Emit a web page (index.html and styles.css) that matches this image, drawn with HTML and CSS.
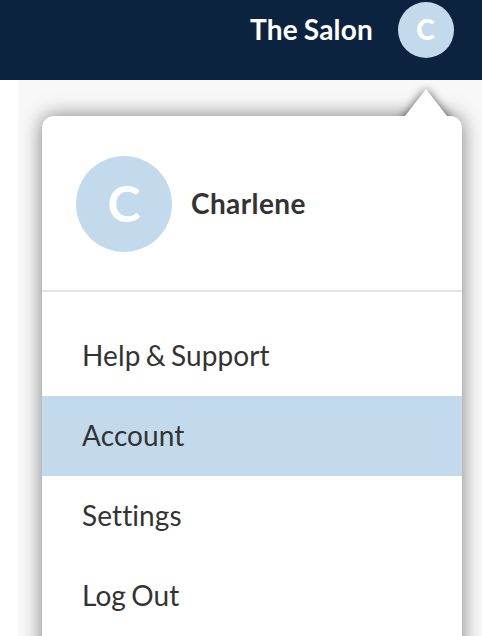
FILE: index.html
```html
<!DOCTYPE html>
<html lang="en">

<head>
    <meta charset="UTF-8">
    <meta name="viewport" content="width=device-width, initial-scale=1.0">
    <title>The Salon</title>
    <link rel="stylesheet" href="styles.css">
</head>

<body>
    <header class="topbar">
        <span class="salon-name">The Salon</span>
        <div class="avatar">C</div>
    </header>
    <main class="page">
        <div class="dropdown">
            <svg class="arrow" width="80" height="34" viewBox="0 0 80 34">
                <path d="M12 43 L40 7 L68 43 Z" fill="#fff" />
            </svg>
            <div class="profile">
                <div class="avatar avatar-large">C</div>
                <span class="profile-name">Charlene</span>
            </div>
            <nav class="menu">
                <a class="menu-item">Help &amp; Support</a>
                <a class="menu-item active">Account</a>
                <a class="menu-item">Settings</a>
                <a class="menu-item">Log Out</a>
            </nav>
        </div>
    </main>
</body>

</html>
```
FILE: styles.css
```css
html,
body {
    margin: 0;
    height: 100%;
    font-family: Lato, sans-serif;
    font-variant-ligatures: none;
    color: #333;
    background-color: #fff;
    overflow: hidden;
}

body {
    display: flex;
    flex-direction: column;
}

.topbar {
    box-sizing: border-box;
    height: 80px;
    flex: none;
    display: flex;
    align-items: center;
    justify-content: flex-end;
    gap: 25px;
    padding: 0 28px 20px 0;
    background-color: #0c233f;
}

.salon-name {
    padding-bottom: 2px;
    color: #fff;
    font-size: 28px;
    font-weight: 700;
    letter-spacing: 0.2px;
    word-spacing: -1.2px;
}

.avatar {
    box-sizing: border-box;
    width: 56px;
    height: 56px;
    flex: none;
    display: flex;
    align-items: center;
    justify-content: center;
    padding: 0 1px 2px 0;
    border-radius: 50%;
    background-color: #c3daec;
    color: #fff;
    font-size: 28px;
    font-weight: 900;
}

.page {
    flex: 1;
    min-height: 0;
    display: flex;
    margin-left: 18px;
    padding: 36px 20px 0 24px;
    background-color: #f8f8f8;
    overflow: hidden;
}

.dropdown {
    position: relative;
    flex: 1;
    margin-bottom: -20px;
    border-radius: 12px 12px 0 0;
    background-color: #fff;
    box-shadow: 0 0 20px rgba(0, 0, 0, 0.5);
}

/* pointer towards the avatar */
.arrow {
    position: absolute;
    top: -34px;
    right: -4px;
    overflow: hidden;
}

.arrow path {
    filter: drop-shadow(0 0 5px rgba(0, 0, 0, 0.6));
}

.profile {
    box-sizing: border-box;
    height: 176px;
    display: flex;
    align-items: center;
    gap: 19px;
    padding: 2px 0 0 34px;
    border-bottom: 2px solid #e3e3e3;
}

.avatar-large {
    width: 96px;
    height: 96px;
    padding: 0 0 2px 0;
    font-size: 50px;
    font-weight: 700;
}

.profile-name {
    padding-bottom: 2px;
    font-size: 28px;
    font-weight: 700;
    letter-spacing: 0.4px;
}

.menu {
    padding-top: 24px;
}

.menu-item {
    box-sizing: border-box;
    display: block;
    height: 80px;
    padding-left: 40px;
    font-size: 28px;
    line-height: 78px;
    letter-spacing: 0.1px;
    word-spacing: -2px;
}

.menu-item.active {
    background-color: #c3daec;
}
```
